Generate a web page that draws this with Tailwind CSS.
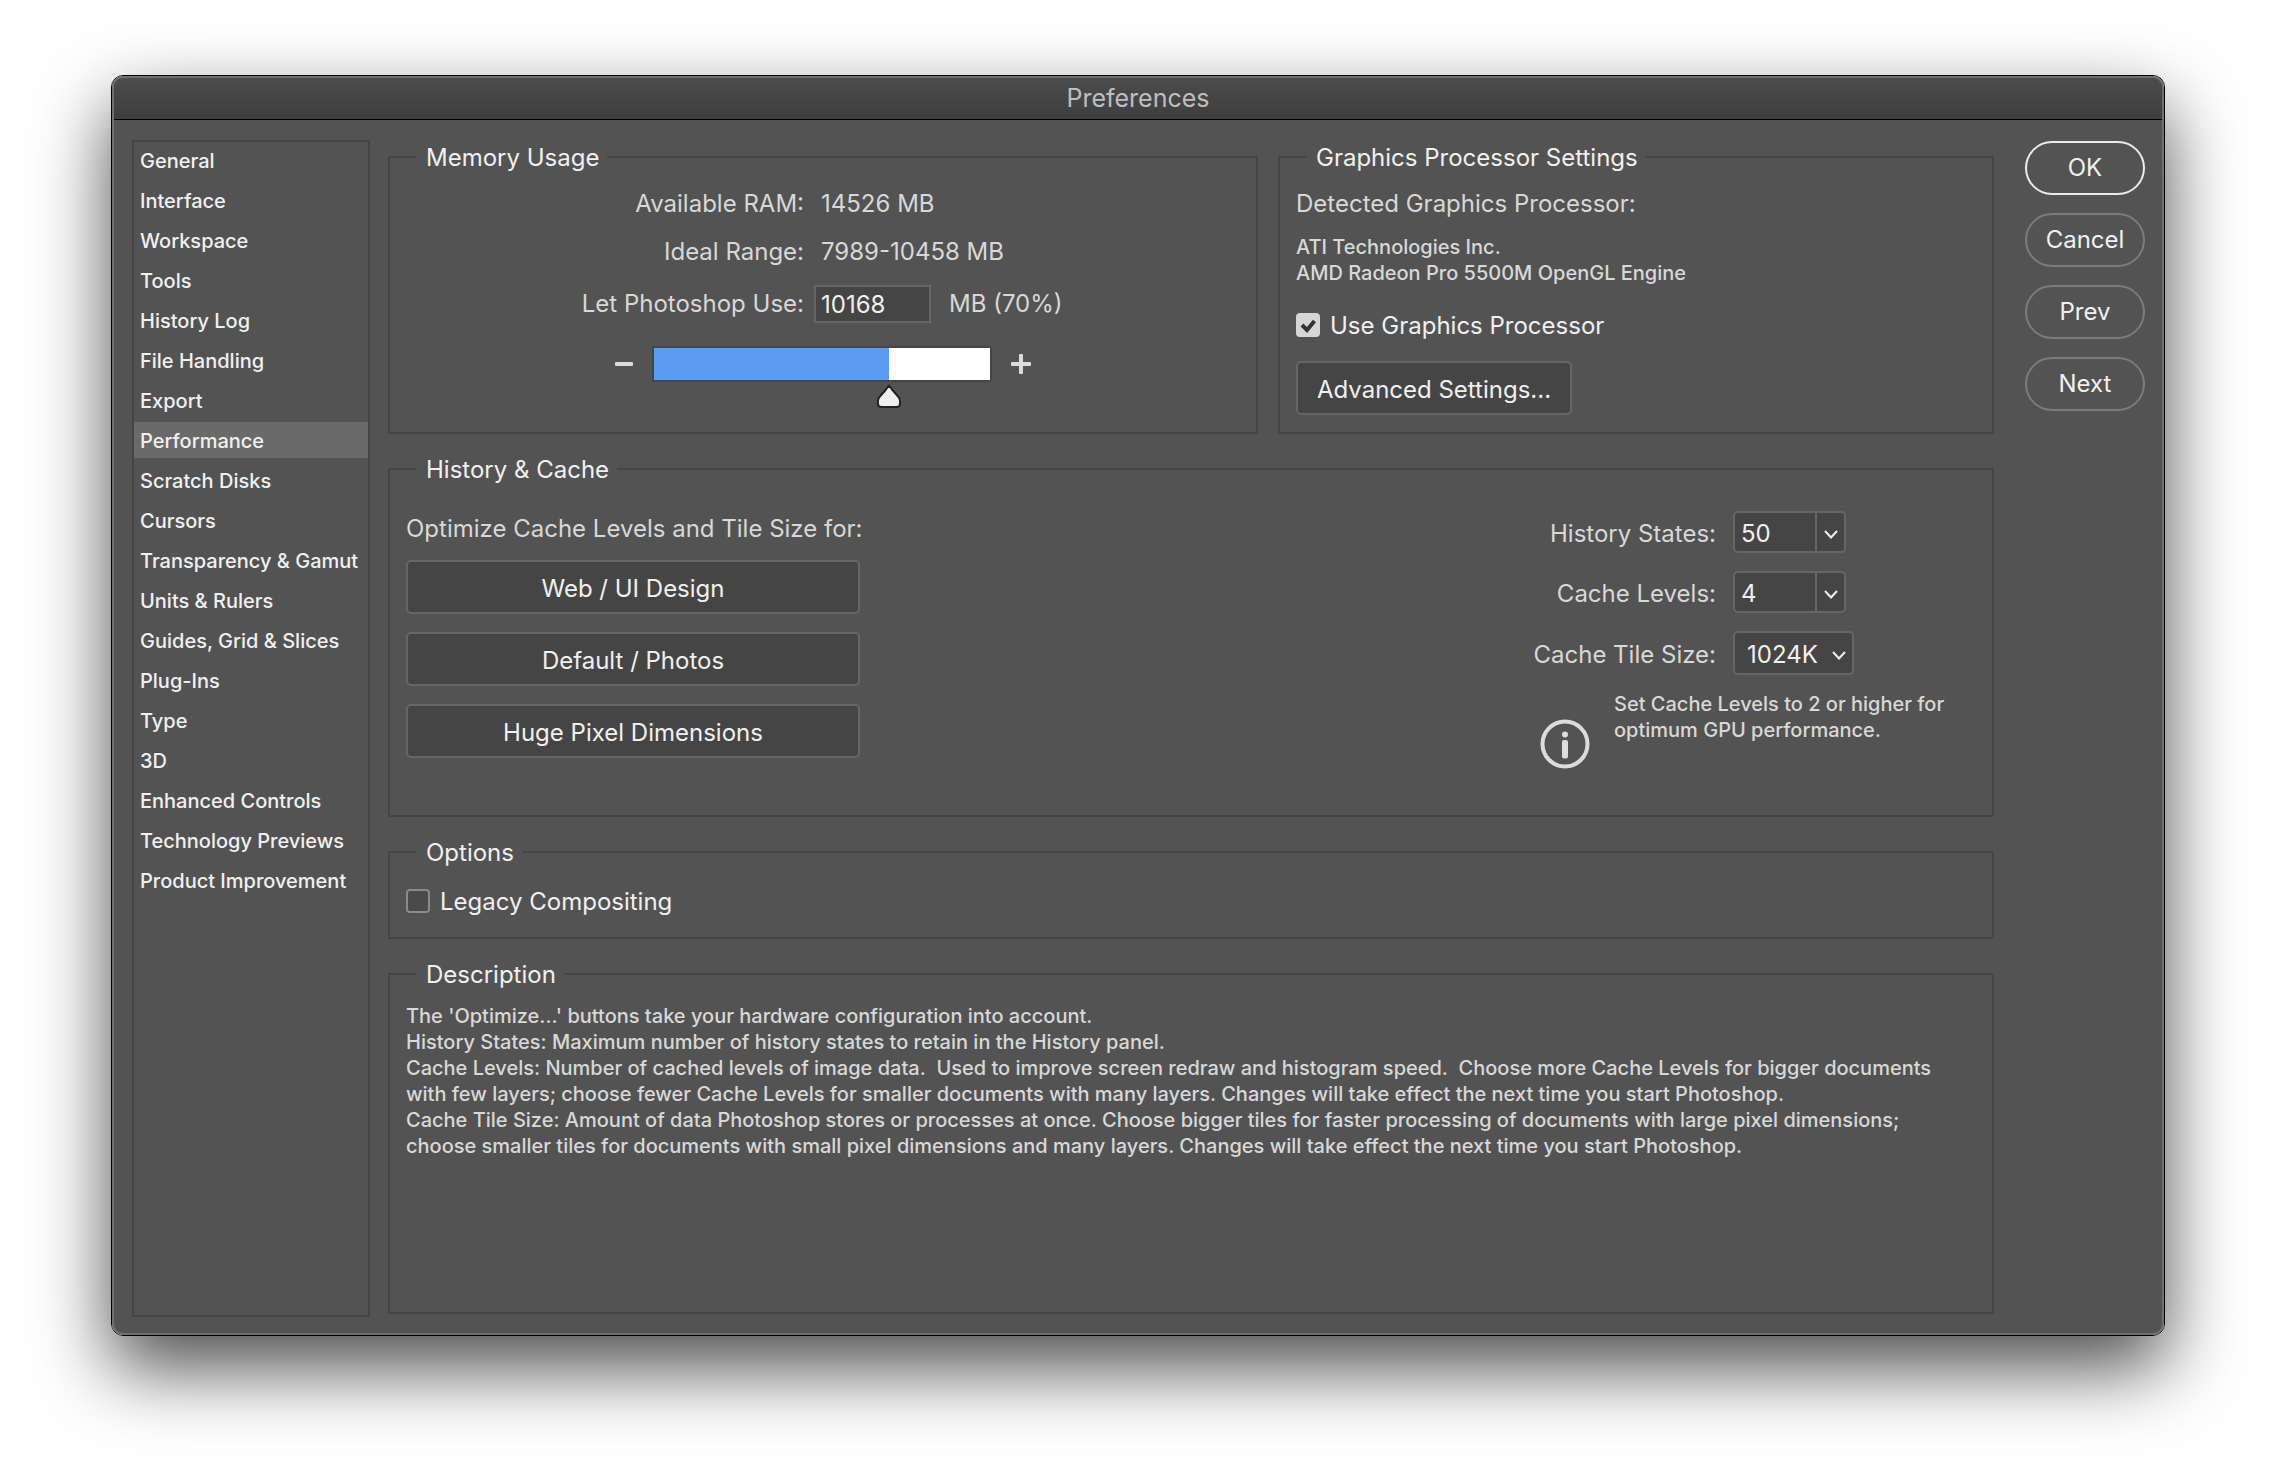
<!DOCTYPE html>
<html lang="en">
<head>
  <meta charset="UTF-8">
  <meta name="viewport" content="width=device-width, initial-scale=1.0">
  <title>Preferences</title>
  <script src="https://cdn.jsdelivr.net/npm/@tailwindcss/browser@4"></script>
</head>
<body class="bg-white font-['Inter','Liberation_Sans',sans-serif] text-2xl text-[#d8d8d8]">

  <div class="mx-[111px] mt-[75px] mb-[148px] rounded-xl border border-black shadow-[0_32px_76px_rgba(0,0,0,0.7)]">
    <div class="rounded-[11px] border-2 border-[#6f6f6f] bg-[#535353] overflow-hidden">

      <!-- Title bar -->
      <header class="h-[42px] flex items-center justify-center border-b border-black bg-gradient-to-b from-[#4c4c4c] to-[#3e3e3e]">
        <h1 class="text-[25px] text-[#bebebe]">Preferences</h1>
      </header>

      <div class="flex pt-5 pb-4 pl-[18px] pr-[17px]">

        <!-- Sections -->
        <nav class="w-[238px] shrink-0 flex flex-col gap-1 border-2 border-[#454545] text-xl font-medium text-[#f0f0f0] whitespace-nowrap">
          <a href="#" class="h-9 px-[6px] pt-[2px] flex items-center">General</a>
          <a href="#" class="h-9 px-[6px] pt-[2px] flex items-center">Interface</a>
          <a href="#" class="h-9 px-[6px] pt-[2px] flex items-center">Workspace</a>
          <a href="#" class="h-9 px-[6px] pt-[2px] flex items-center">Tools</a>
          <a href="#" class="h-9 px-[6px] pt-[2px] flex items-center">History Log</a>
          <a href="#" class="h-9 px-[6px] pt-[2px] flex items-center">File Handling</a>
          <a href="#" class="h-9 px-[6px] pt-[2px] flex items-center">Export</a>
          <a href="#" class="h-9 px-[6px] pt-[2px] flex items-center bg-[#6a6a6a]" aria-current="page">Performance</a>
          <a href="#" class="h-9 px-[6px] pt-[2px] flex items-center">Scratch Disks</a>
          <a href="#" class="h-9 px-[6px] pt-[2px] flex items-center">Cursors</a>
          <a href="#" class="h-9 px-[6px] pt-[2px] flex items-center">Transparency &amp; Gamut</a>
          <a href="#" class="h-9 px-[6px] pt-[2px] flex items-center">Units &amp; Rulers</a>
          <a href="#" class="h-9 px-[6px] pt-[2px] flex items-center">Guides, Grid &amp; Slices</a>
          <a href="#" class="h-9 px-[6px] pt-[2px] flex items-center">Plug-Ins</a>
          <a href="#" class="h-9 px-[6px] pt-[2px] flex items-center">Type</a>
          <a href="#" class="h-9 px-[6px] pt-[2px] flex items-center">3D</a>
          <a href="#" class="h-9 px-[6px] pt-[2px] flex items-center">Enhanced Controls</a>
          <a href="#" class="h-9 px-[6px] pt-[2px] flex items-center">Technology Previews</a>
          <a href="#" class="h-9 px-[6px] pt-[2px] flex items-center">Product Improvement</a>
        </nav>

        <main class="flex-1 min-w-0 ml-[18px] mr-[31px] pt-[2px] pb-[3px] flex flex-col gap-5">
          <div class="grid grid-cols-[870fr_716fr] gap-5">

            <!-- Memory -->
            <fieldset class="min-w-0 border-2 border-[#454545] rounded-xs">
              <legend class="ml-[26px] h-[30px] flex items-center pt-[2px] pl-[10px] pr-2 text-[#f0f0f0]">Memory Usage</legend>
              <div class="pt-2 grid grid-cols-[414fr_435fr] gap-x-[17px]">
                <span class="h-12 flex items-center justify-end">Available RAM:</span>
                <span class="h-12 flex items-center">14526 MB</span>
                <span class="h-12 flex items-center justify-end">Ideal Range:</span>
                <span class="h-12 flex items-center">7989-10458 MB</span>
                <label for="ram" class="h-14 flex items-center justify-end">Let Photoshop Use:</label>
                <div class="h-14 flex items-center gap-[18px] -ml-[7px]">
                  <input id="ram" type="text" value="10168" class="w-[117px] h-[38px] pl-[5px] border-2 border-[#666666] bg-[#454545] text-[#f0f0f0] outline-none">
                  <span>MB (70%)</span>
                </div>
              </div>
              <div class="mt-[14px] flex items-center justify-center gap-[19px]">
                <button aria-label="Less memory" class="text-[#dcdcdc]">
                  <svg width="18" height="20" viewBox="0 0 18 20" fill="currentColor"><rect y="8" width="18" height="4" rx="1"/></svg>
                </button>
                <div class="relative w-[340px] h-9 border-2 border-[#454545] bg-white">
                  <div id="fill" class="h-full bg-[#5c9bf3]" style="width: 70%"></div>
                  <svg id="thumb" class="absolute top-[36px] -ml-3" style="left: 70%" width="24" height="24" viewBox="0 0 24 24" fill="#f0f0f0" stroke="#222222" stroke-width="2" stroke-linejoin="round"><path d="M12 1.500 Q13.500 3.500 15 5.500 L21.500 13 Q23 14.500 23 17 V19.500 Q23 23 19.500 23 H4.500 Q1 23 1 19.500 V17 Q1 14.500 2.500 13 L9 5.500 Q10.500 3.500 12 1.500 Z"/></svg>
                  <input id="slider" type="range" min="0" max="100" value="70" aria-label="Memory usage" class="absolute inset-x-0 top-0 w-full h-[58px] opacity-0">
                </div>
                <button aria-label="More memory" class="text-[#dcdcdc]">
                  <svg width="20" height="20" viewBox="0 0 20 20" fill="currentColor"><rect y="8" width="20" height="4" rx="1"/><rect x="8" width="4" height="20" rx="1"/></svg>
                </button>
              </div>
            </fieldset>

            <!-- Graphics processor -->
            <fieldset class="min-w-0 px-4 pb-[17px] border-2 border-[#454545] rounded-xs">
              <legend class="ml-[10px] h-[30px] flex items-center pt-[2px] pl-[10px] pr-2 text-[#f0f0f0]">Graphics Processor Settings</legend>
              <p class="mt-4 leading-8">Detected Graphics Processor:</p>
              <p class="mt-[14px] text-xl leading-[26px] font-medium">ATI Technologies Inc.<br>AMD Radeon Pro 5500M OpenGL Engine</p>
              <label class="mt-[23px] h-8 w-fit flex items-center gap-[10px] text-[#f0f0f0]">
                <span class="relative size-6">
                  <input type="checkbox" checked class="peer block appearance-none size-6 rounded-[4px] border-2 border-[#8a8a8a] bg-[#4a4a4a] checked:border-[#d6d6d6] checked:bg-[#d6d6d6]">
                  <svg class="absolute inset-0 pointer-events-none hidden peer-checked:block" width="24" height="24" viewBox="0 0 24 24" fill="none" stroke="#333333" stroke-width="4"><path d="M6 12 L11 17 L18.500 8"/></svg>
                </span>
                <span class="pt-[2px]">Use Graphics Processor</span>
              </label>
              <button class="mt-5 w-[276px] h-[54px] pt-1 block rounded-[5px] border-2 border-[#666666] bg-[#454545] text-[#f0f0f0]">Advanced Settings...</button>
            </fieldset>
          </div>

          <!-- History and cache -->
          <fieldset class="min-w-0 px-4 pb-[46px] border-2 border-[#454545] rounded-xs">
            <legend class="ml-[10px] h-[30px] flex items-center pt-[2px] pl-[10px] pr-2 text-[#f0f0f0]">History &amp; Cache</legend>
            <div class="flex justify-between">
              <div class="w-[454px] pt-[29px] flex flex-col gap-[18px] text-[#f0f0f0]">
                <p class="-mb-[3px] leading-8 text-[#d8d8d8] whitespace-nowrap">Optimize Cache Levels and Tile Size for:</p>
                <button class="h-[54px] pt-1 rounded-[5px] border-2 border-[#666666] bg-[#454545]">Web / UI Design</button>
                <button class="h-[54px] pt-1 rounded-[5px] border-2 border-[#666666] bg-[#454545]">Default / Photos</button>
                <button class="h-[54px] pt-1 rounded-[5px] border-2 border-[#666666] bg-[#454545]">Huge Pixel Dimensions</button>
              </div>

              <div class="w-[441px] pt-[27px]">
                <div class="grid grid-cols-[181px_1fr] gap-x-[17px] gap-y-[18px] whitespace-nowrap">
                  <label for="states" class="pt-1 flex items-center justify-end">History States:</label>
                  <div class="w-[113px] h-[42px] flex rounded-[5px] border-2 border-[#666666] bg-[#454545] text-[#f0f0f0]">
                    <input id="states" type="text" value="50" class="w-20 pt-1 pl-[6px] outline-none">
                    <button aria-label="History states list" class="flex-1 pt-1 flex items-center justify-center border-l-2 border-[#666666]">
                      <svg width="14" height="9" viewBox="0 0 14 9" fill="none" stroke="currentColor" stroke-width="2"><path d="M1 1 L7 7.500 L13 1"/></svg>
                    </button>
                  </div>
                  <label for="levels" class="pt-1 flex items-center justify-end">Cache Levels:</label>
                  <div class="w-[113px] h-[42px] flex rounded-[5px] border-2 border-[#666666] bg-[#454545] text-[#f0f0f0]">
                    <input id="levels" type="text" value="4" class="w-20 pt-1 pl-[6px] outline-none">
                    <button aria-label="Cache levels list" class="flex-1 pt-1 flex items-center justify-center border-l-2 border-[#666666]">
                      <svg width="14" height="9" viewBox="0 0 14 9" fill="none" stroke="currentColor" stroke-width="2"><path d="M1 1 L7 7.500 L13 1"/></svg>
                    </button>
                  </div>
                  <label for="tile" class="pt-1 flex items-center justify-end">Cache Tile Size:</label>
                  <div class="relative w-[121px] h-11 text-[#f0f0f0]">
                    <select id="tile" class="appearance-none w-full h-full pt-1 pl-3 rounded-[5px] border-2 border-[#666666] bg-[#454545] outline-none">
                      <option>1024K</option>
                      <option>128K</option>
                      <option>132K</option>
                      <option>1028K</option>
                    </select>
                    <svg class="absolute right-2 top-5 pointer-events-none" width="14" height="9" viewBox="0 0 14 9" fill="none" stroke="currentColor" stroke-width="2"><path d="M1 1 L7 7.500 L13 1"/></svg>
                  </div>
                </div>
                <div class="mt-4 ml-[5px] flex items-start gap-6">
                  <svg class="mt-7 shrink-0 text-[#dcdcdc]" width="50" height="50" viewBox="0 0 50 50" fill="currentColor"><circle cx="25" cy="25" r="22.500" fill="none" stroke="currentColor" stroke-width="4"/><circle cx="25" cy="15.500" r="3"/><rect x="22" y="21" width="6" height="18.500" rx="2"/></svg>
                  <p class="text-xl leading-[26px] font-medium whitespace-nowrap">Set Cache Levels to 2 or higher for<br>optimum GPU performance.</p>
                </div>
              </div>
            </div>
          </fieldset>

          <!-- Options -->
          <fieldset class="min-w-0 px-4 pb-5 border-2 border-[#454545] rounded-xs">
            <legend class="ml-[10px] h-[30px] flex items-center pt-[2px] pl-[10px] pr-2 text-[#f0f0f0]">Options</legend>
            <label class="mt-[18px] h-8 w-fit flex items-center gap-[10px] text-[#f0f0f0]">
              <span class="relative size-6">
                <input type="checkbox" class="peer block appearance-none size-6 rounded-[4px] border-2 border-[#8a8a8a] bg-[#4a4a4a] checked:border-[#d6d6d6] checked:bg-[#d6d6d6]">
                <svg class="absolute inset-0 pointer-events-none hidden peer-checked:block" width="24" height="24" viewBox="0 0 24 24" fill="none" stroke="#333333" stroke-width="4"><path d="M6 12 L11 17 L18.500 8"/></svg>
              </span>
              <span class="pt-[2px]">Legacy Compositing</span>
            </label>
          </fieldset>

          <!-- Description -->
          <fieldset class="min-w-0 flex-1 min-h-[355px] px-4 border-2 border-[#454545] rounded-xs">
            <legend class="ml-[10px] h-[30px] flex items-center pt-[2px] pl-[10px] pr-2 text-[#f0f0f0]">Description</legend>
            <p class="mt-[14px] text-xl leading-[26px] font-medium">
              The 'Optimize...' buttons take your hardware configuration into account.<br>
              History States: Maximum number of history states to retain in the History panel.<br>
              Cache Levels: Number of cached levels of image data.&nbsp; Used to improve screen redraw and histogram speed.&nbsp; Choose more Cache Levels for bigger documents<br>
              with few layers; choose fewer Cache Levels for smaller documents with many layers. Changes will take effect the next time you start Photoshop.<br>
              Cache Tile Size: Amount of data Photoshop stores or processes at once. Choose bigger tiles for faster processing of documents with large pixel dimensions;<br>
              choose smaller tiles for documents with small pixel dimensions and many layers. Changes will take effect the next time you start Photoshop.
            </p>
          </fieldset>
        </main>

        <!-- Dialog buttons -->
        <div class="w-[120px] shrink-0 flex flex-col gap-[18px] mt-px text-[#f0f0f0]">
          <button class="h-[54px] rounded-full border-2 border-[#ececec]">OK</button>
          <button class="h-[54px] rounded-full border-2 border-[#7c7c7c]">Cancel</button>
          <button class="h-[54px] rounded-full border-2 border-[#7c7c7c]">Prev</button>
          <button class="h-[54px] rounded-full border-2 border-[#7c7c7c]">Next</button>
        </div>
      </div>
    </div>
  </div>

  <script>
    const slider = document.getElementById("slider");
    slider.addEventListener("input", () => {
      document.getElementById("fill").style.width = slider.value + "%";
      document.getElementById("thumb").style.left = slider.value + "%";
    });
  </script>
</body>
</html>
